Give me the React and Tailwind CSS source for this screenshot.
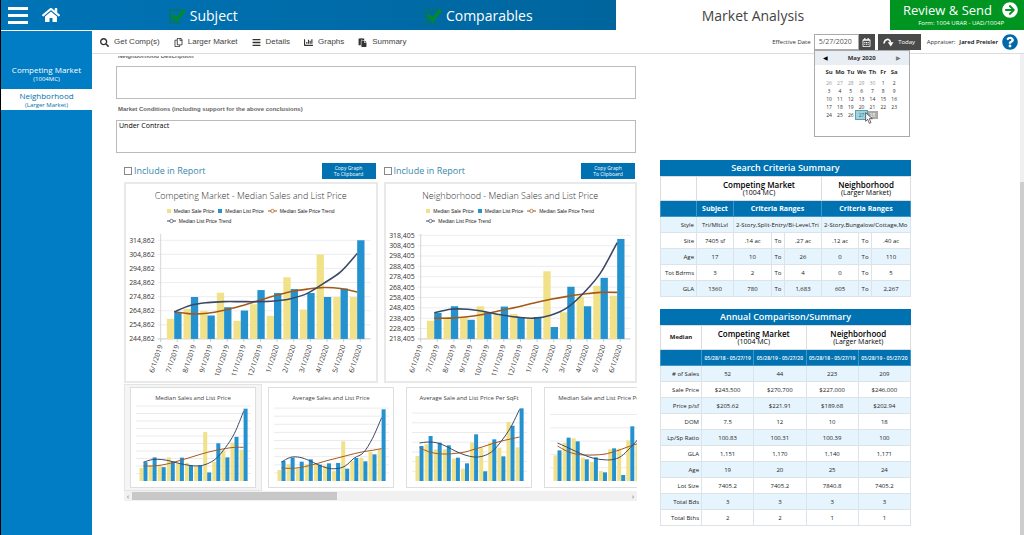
import React, { useState } from 'react';
import { FaHome, FaSearch, FaRegCopy, FaChartBar, FaPaste, FaRegCalendarAlt, FaQuestionCircle, FaArrowCircleRight, FaBars } from 'react-icons/fa';

const YELLOW = '#f1e28a';
const BLUE = '#2492cf';
const SALE_TREND = '#a4591c';
const LIST_TREND = '#3c4866';

const MONTHS = ['6/1/2019', '7/1/2019', '8/1/2019', '9/1/2019', '10/1/2019', '11/1/2019', '12/1/2019', '1/1/2020', '2/1/2020', '3/1/2020', '4/1/2020', '5/1/2020', '6/1/2020'];

// series values are heights above the baseline, in thirds of a unit
const competing = {
    sale: [61, 91, 85, 140, 55, 105, 70, 187, 89, 256, 127, 127],
    list: [79, 127, 71, 96, 86, 148, 139, 151, 139, 127, 153, 299],
    saleTrend: [82, 76, 78, 87, 100, 115, 130, 143, 151, 156, 153, 142],
    listTrend: [82, 102, 110, 113, 113, 113, 115, 122, 138, 169, 203, 259],
};

const neighborhood = {
    sale: [55, 66, 66, 99, 75, 76, 61, 205, 81, 128, 161, 131],
    list: [79, 99, 58, 81, 98, 66, 66, 36, 158, 99, 185, 303],
    saleTrend: [63, 63, 67, 75, 86, 97, 109, 120, 129, 136, 141, 141],
    listTrend: [79, 90, 90, 83, 73, 66, 63, 72, 95, 140, 200, 292],
};

const averageSales = {
    sale: [33, 50, 37, 50, 50, 47, 30, 119, 60, 70, 87, 95],
    list: [60, 70, 58, 65, 49, 53, 54, 37, 69, 59, 80, 215],
    saleTrend: [39, 38, 40, 46, 53, 61, 68, 75, 82, 88, 92, 97],
    listTrend: [57, 71, 71, 62, 49, 39, 37, 45, 69, 85, 128, 190],
};

const averageSqft = {
    sale: [75, 110, 95, 95, 67, 37, 115, 100, 115, 100, 177, 101],
    list: [105, 135, 115, 107, 70, 53, 140, 29, 125, 74, 166, 218],
    saleTrend: [100, 88, 82, 81, 83, 87, 95, 103, 112, 120, 126, 132],
    listTrend: [114, 117, 114, 103, 89, 78, 72, 75, 89, 120, 160, 215],
};

const medianSqft = {
    sale: [77, 115, 128, 70, 57, 30, 95, 97, 122, 110, 120, 130],
    list: [92, 130, 119, 65, 71, 26, 98, 18, 164, 110, 140, 210],
    saleTrend: [105, 90, 81, 78, 78, 80, 86, 95, 105, 114, 122, 130],
    listTrend: [114, 102, 89, 77, 68, 64, 64, 74, 100, 130, 165, 205],
};

const thumbs = [
    { title: 'Median Sales and List Price', data: neighborhood, scale: 0.716, grid: 7.5, lines: 10 },
    { title: 'Average Sales and List Price', data: averageSales, scale: 1, grid: 8.1, lines: 9 },
    { title: 'Average Sale and List Price Per SqFt', data: averageSqft, scale: 1, grid: 9.7, lines: 7 },
    { title: 'Median Sale and List Price Per SqFt', data: medianSqft, scale: 1, grid: 13.3, lines: 5 },
];

// smooth line through the points (Catmull-Rom to bezier)
function curve(points) {
    let d = `M${points[0][0]} ${points[0][1]}`;
    for (let i = 0; i < points.length - 1; i++) {
        const p0 = points[i - 1] || points[i];
        const p1 = points[i];
        const p2 = points[i + 1];
        const p3 = points[i + 2] || p2;
        d += ` C${p1[0] + (p2[0] - p0[0]) / 6} ${p1[1] + (p2[1] - p0[1]) / 6} ${p2[0] - (p3[0] - p1[0]) / 6} ${p2[1] - (p3[1] - p1[1]) / 6} ${p2[0]} ${p2[1]}`;
    }
    return d;
}

function Series({ data, x0, pitch, bar, base, scale = 1, stroke = 1.6 }) {
    const h = v => (v * scale) / 3;
    const trend = values => curve(values.map((v, i) => [x0 + i * pitch, base - h(v)]));
    return (
        <g>
            {data.sale.map((v, i) => (
                <rect key={`s${i}`} x={x0 + i * pitch - bar} y={base - h(v)} width={bar} height={h(v)} fill={YELLOW} />
            ))}
            {data.list.map((v, i) => (
                <rect key={`l${i}`} x={x0 + i * pitch} y={base - h(v)} width={bar} height={h(v)} fill={BLUE} />
            ))}
            <path d={trend(data.saleTrend)} fill="none" stroke={SALE_TREND} strokeWidth={stroke} />
            <path d={trend(data.listTrend)} fill="none" stroke={LIST_TREND} strokeWidth={stroke} />
        </g>
    );
}

function LegendLine({ color }) {
    return (
        <svg width="9" height="6" viewBox="0 0 9 6">
            <path d="M0 3h9" stroke={color} />
            <circle cx="4.5" cy="3" r="1.7" fill="#fff" stroke={color} strokeWidth="0.7" />
        </svg>
    );
}

function ChartCard({ title, data, top, step, count }) {
    const base = 108;
    const gap = step / 3;
    return (
        <div className="border-2 border-[#e9e9e9] bg-white">
            <h3 className="pt-1 text-center text-[9px] leading-4 font-light text-[#333]">{title}</h3>
            <div className="mx-auto flex w-[176px] flex-wrap gap-x-1 pt-0.5 pb-1.5 pl-1 font-[Liberation_Sans] text-[5px] leading-[10px] text-[#222]">
                <span className="flex items-center gap-[3px]"><i className="size-1 bg-[#f1e28a]" />Median Sale Price</span>
                <span className="flex items-center gap-[3px]"><i className="size-1 bg-[#2492cf]" />Median List Price</span>
                <span className="flex items-center gap-[3px]"><LegendLine color={SALE_TREND} />Median Sale Price Trend</span>
                <span className="flex items-center gap-[3px]"><LegendLine color={LIST_TREND} />Median List Price Trend</span>
            </div>
            <svg viewBox="0 0 252 150" className="block w-full">
                {Array.from({ length: count + 1 }, (_, i) => (
                    <g key={i}>
                        <path d={`M32 ${base - i * gap}H247`} stroke={i ? '#e8e8ec' : '#bbb'} strokeWidth="0.8" />
                        <text x="29" y={base - i * gap + 2.5} textAnchor="end" fontSize="7" fill="#333">
                            {(top - (count - i) * 10000).toLocaleString('en-US')}
                        </text>
                    </g>
                ))}
                <path d={`M35 2V${base}`} stroke="#ccc" strokeWidth="0.8" />
                {MONTHS.map((m, i) => (
                    <g key={m}>
                        <path d={`M${35 + i * 16.8} ${base}v3`} stroke="#bbb" strokeWidth="0.8" />
                        <text transform={`translate(${37 + i * 16.8} 115) rotate(-72)`} textAnchor="end" fontSize="7" fill="#333">{m}</text>
                    </g>
                ))}
                <Series data={data} x0={48.7} pitch={16.8} bar={7.4} base={base} />
            </svg>
        </div>
    );
}

function ReportChart({ id, ...chart }) {
    return (
        <section className="min-w-0 flex-1">
            <div className="flex h-[19px] items-start justify-between pr-0.5">
                <label htmlFor={id} className="flex items-center gap-0.5 text-[9px] leading-4 text-[#3a87ad]">
                    <input id={id} type="checkbox" className="size-2 appearance-none border border-[#888] bg-white" />
                    Include in Report
                </label>
                <button className="h-4 w-[54px] bg-[#0072b1] text-[5px] leading-[6px] font-medium text-white">
                    Copy Graph<br />To Clipboard
                </button>
            </div>
            <ChartCard {...chart} />
        </section>
    );
}

function Thumb({ title, data, scale, grid, lines, active }) {
    return (
        <button className={active ? 'shrink-0 border border-[#e4e4e4] bg-[#f5f5f5] px-[5px] py-0.5' : 'shrink-0 border border-transparent px-[5px] py-0.5'}>
            <span className="block w-[126px] border border-[#dedede] bg-white pt-1">
                <span className="block text-center text-[6px] leading-3 whitespace-nowrap text-[#444]">{title}</span>
                <svg viewBox="0 0 124 83" className="block w-full">
                    {Array.from({ length: lines }, (_, i) => (
                        <path key={i} d={`M5 ${77 - (i + 1) * grid}H120`} stroke="#e6e6ea" strokeWidth="0.8" />
                    ))}
                    <Series data={data} x0={12.5} pitch={9.1} bar={4} base={77} scale={scale} stroke={1} />
                </svg>
            </span>
        </button>
    );
}

const criteria = [
    ['Style', 'Tri/MltLvl', '2-Story,Split-Entry/Bi-Level,Tri/', '2-Story,Bungalow/Cottage,Mo'],
    ['Site', '7405 sf', '.14 ac', 'To', '.27 ac', '.12 ac', 'To', '.40 ac'],
    ['Age', '17', '10', 'To', '26', '0', 'To', '110'],
    ['Tot Bdrms', '3', '2', 'To', '4', '0', 'To', '5'],
    ['GLA', '1360', '780', 'To', '1,683', '605', 'To', '2,267'],
];

const annual = [
    ['# of Sales', '52', '44', '223', '209'],
    ['Sale Price', '$243,500', '$270,700', '$227,000', '$246,000'],
    ['Price p/sf', '$205.62', '$221.91', '$189.68', '$202.94'],
    ['DOM', '7.5', '12', '10', '18'],
    ['Lp/Sp Ratio', '100.83', '100.31', '100.39', '100'],
    ['GLA', '1,151', '1,170', '1,140', '1,171'],
    ['Age', '19', '20', '25', '24'],
    ['Lot Size', '7405.2', '7405.2', '7840.8', '7405.2'],
    ['Total Bds', '3', '3', '3', '3'],
    ['Total Bths', '2', '2', '1', '1'],
];

function MarketHead({ name, note, span }) {
    return (
        <th colSpan={span} className="h-6 border border-[#dcdcdc] p-0 text-[8px] leading-[9px] font-semibold text-black">
            {name}
            <span className="block text-[7px] leading-[8px] font-normal">{note}</span>
        </th>
    );
}

function BlueHead({ children, span, small }) {
    return (
        <th colSpan={span} className={small ? 'h-4 border border-[#3f95c6] p-0 text-[5px] leading-[8px] font-semibold whitespace-nowrap' : 'h-4 border border-[#3f95c6] p-0 text-[7px] leading-[10px]'}>
            {children}
        </th>
    );
}

const tableClass = 'w-full table-fixed border-collapse border border-[#dcdcdc] text-center text-[#222]';
const captionClass = 'h-4 bg-[#0072b1] text-[9px] leading-4 font-semibold text-white';
const cellClass = 'h-4 overflow-hidden border border-[#dce4ea] p-0 text-[6px] leading-[10px] whitespace-nowrap';
const rowHeadClass = 'h-4 border border-[#dce4ea] p-0 pr-0.5 text-right text-[6px] leading-[10px] font-medium whitespace-nowrap';

function CriteriaTable() {
    return (
        <table className={tableClass}>
            <caption className={captionClass}>Search Criteria Summary</caption>
            <colgroup>
                <col className="w-[36px]" /><col className="w-[37px]" /><col className="w-[38px]" /><col className="w-[13px]" />
                <col className="w-[37px]" /><col className="w-[37px]" /><col className="w-[13px]" /><col />
            </colgroup>
            <thead>
                <tr>
                    <td className="border border-[#dcdcdc]" />
                    <MarketHead name="Competing Market" note="(1004 MC)" span={4} />
                    <MarketHead name="Neighborhood" note="(Larger Market)" span={3} />
                </tr>
                <tr className="bg-[#0072b1] text-white">
                    <BlueHead />
                    <BlueHead>Subject</BlueHead>
                    <BlueHead span={3}>Criteria Ranges</BlueHead>
                    <BlueHead span={3}>Criteria Ranges</BlueHead>
                </tr>
            </thead>
            <tbody>
                {criteria.map(([head, ...cells]) => (
                    <tr key={head} className="odd:bg-[#e6f4fd]">
                        <th className={rowHeadClass}>{head}</th>
                        {cells.map((c, i) => (
                            <td key={i} colSpan={cells.length === 3 && i > 0 ? 3 : 1} className={cellClass}>
                                {cells.length === 3 && i > 0 ? <span className="mx-0.5 block overflow-hidden text-left">{c}</span> : c}
                            </td>
                        ))}
                    </tr>
                ))}
            </tbody>
        </table>
    );
}

function AnnualTable() {
    return (
        <table className={tableClass}>
            <caption className={captionClass}>Annual Comparison/Summary</caption>
            <colgroup>
                <col className="w-[41px]" /><col /><col /><col /><col />
            </colgroup>
            <thead>
                <tr>
                    <th className="border border-[#dcdcdc] p-0 text-[6px]">Median</th>
                    <MarketHead name="Competing Market" note="(1004 MC)" span={2} />
                    <MarketHead name="Neighborhood" note="(Larger Market)" span={2} />
                </tr>
                <tr className="bg-[#0072b1] text-white">
                    <BlueHead />
                    <BlueHead small>05/28/18 - 05/27/19</BlueHead>
                    <BlueHead small>05/28/19 - 05/27/20</BlueHead>
                    <BlueHead small>05/28/18 - 05/27/19</BlueHead>
                    <BlueHead small>05/28/19 - 05/27/20</BlueHead>
                </tr>
            </thead>
            <tbody>
                {annual.map(([head, ...cells]) => (
                    <tr key={head} className="odd:bg-[#e6f4fd]">
                        <th className={rowHeadClass}>{head}</th>
                        {cells.map((c, i) => <td key={i} className={cellClass}>{c}</td>)}
                    </tr>
                ))}
            </tbody>
        </table>
    );
}

const weeks = [
    [26, 27, 28, 29, 30, 1, 2],
    [3, 4, 5, 6, 7, 8, 9],
    [10, 11, 12, 13, 14, 15, 16],
    [17, 18, 19, 20, 21, 22, 23],
    [24, 25, 26, 27, 28],
];

function dayClass(week, day) {
    if (week === 0 && day > 20) return 'p-0 text-[#999]';
    if (week === 4 && day === 27) return 'bg-[#9fd3df] p-0 text-[#2a6f80] outline outline-[#5f9ea8]';
    if (week === 4 && day === 28) return 'bg-[#a9a9a9] p-0 text-white';
    return 'p-0';
}

function Calendar() {
    return (
        <div className="absolute top-full left-0 z-10 h-[87px] w-24 border border-[#aaa] bg-white text-[#333]">
            <div className="flex h-3.5 items-center justify-between bg-[#e9eef5] px-2">
                <button aria-label="Previous month" className="text-[6px] leading-none text-black">◀</button>
                <span className="text-[6px] font-bold">May 2020</span>
                <button aria-label="Next month" className="text-[6px] leading-none text-[#777]">▶</button>
            </div>
            <table className="mx-auto w-[76px] table-fixed text-center text-[5px] leading-[8px]">
                <thead>
                    <tr className="h-3.5">
                        {['Su', 'Mo', 'Tu', 'We', 'Th', 'Fr', 'Sa'].map(d => <th key={d} className="p-0 text-[6px]">{d}</th>)}
                    </tr>
                </thead>
                <tbody>
                    {weeks.map((week, w) => (
                        <tr key={w}>
                            {week.map(day => <td key={day} className={dayClass(w, day)}>{day}</td>)}
                        </tr>
                    ))}
                </tbody>
            </table>
            <svg viewBox="0 0 12 18" className="absolute top-[61px] left-[50px] h-3 w-2">
                <path d="M1 1v13l3-3 2.5 6 2.5-1-2.5-6H11z" fill="#fff" stroke="#222" />
            </svg>
        </div>
    );
}

function Tab({ children, className }) {
    return (
        <a href="#" className={className}>
            <svg width="18" height="17" viewBox="0 0 18 17" fill="none">
                <path d="M13 15.5H2V3H13" stroke="#07755f" strokeWidth="1.5" />
                <path d="M4 8l4.5 5L16.5 3" stroke="#008a2c" strokeWidth="3.5" />
            </svg>
            {children}
        </a>
    );
}

const tools = [
    { name: 'Get Comp(s)', icon: FaSearch },
    { name: 'Larger Market', icon: FaRegCopy },
    { name: 'Details', icon: FaBars },
    { name: 'Graphs', icon: FaChartBar },
    { name: 'Summary', icon: FaPaste },
];

export default function App() {
    const [date, setDate] = useState('5/27/2020');
    const [description, setDescription] = useState('');
    const [conditions, setConditions] = useState('Under Contract');

    return (
        <div className="flex min-h-screen flex-col overflow-hidden border-l border-black bg-white font-['Open_Sans',sans-serif] text-[#333]">
            <header className="flex h-[31px] border-b border-white bg-white">
                <div className="flex flex-1 bg-linear-to-r from-[#0074b7] to-[#00659d] text-white">
                    <div className="flex w-[92px] items-center gap-3.5 pl-[7px]">
                        <button aria-label="Menu" className="flex w-5 flex-col gap-1">
                            <i className="h-[3px] bg-white" /><i className="h-[3px] bg-white" /><i className="h-[3px] bg-white" />
                        </button>
                        <a href="#" aria-label="Home"><FaHome size={18} /></a>
                    </div>
                    <Tab className="flex flex-1 items-center justify-center gap-1 pr-14 text-[14px]">Subject</Tab>
                    <Tab className="flex flex-1 items-center justify-center gap-1 pr-7 text-[14px]">Comparables</Tab>
                </div>
                <a href="#" className="flex w-[274px] items-center justify-center text-[14px] text-[#444]">Market Analysis</a>
                <a href="#" className="flex w-[134px] flex-col items-end bg-[#009420] pr-1.5 text-white">
                    <span className="flex items-center gap-2.5 pt-px text-[13px] leading-[18px]">
                        Review &amp; Send
                        <FaArrowCircleRight size={16} />
                    </span>
                    <span className="pr-3.5 text-[6px] leading-[8px]">Form: 1004 URAR - UAD/1004P</span>
                </a>
            </header>

            <div className="flex flex-1">
                <nav className="w-[91px] shrink-0 bg-[#007dc4] pt-[33px] text-center">
                    <a href="#" className="block pb-1.5 text-[8px] leading-[11px] text-white">
                        Competing Market
                        <span className="block text-[6px] leading-[8px]">(1004MC)</span>
                    </a>
                    <a href="#" className="block bg-white py-px text-[8px] leading-[11px] text-[#0070a8]">
                        Neighborhood
                        <span className="block text-[6px] leading-[8px]">(Larger Market)</span>
                    </a>
                </nav>

                <main className="flex min-w-0 flex-1 flex-col">
                    <div className="flex h-[23px] items-center border-b border-[#ddd] pr-1.5 pl-2">
                        <div className="flex flex-1 gap-3.5 font-[Liberation_Sans] text-[8px] text-[#444]">
                            {tools.map(tool => {
                                const Icon = tool.icon;
                                return (
                                    <button key={tool.name} className="flex items-center gap-[5px]">
                                        <Icon size={9} className="text-[#333]" />
                                        {tool.name}
                                    </button>
                                );
                            })}
                        </div>
                        <div className="flex items-center text-[6px]">
                            <label htmlFor="effective" className="pr-[3px]">Effective Date</label>
                            <div className="relative flex h-4 w-[61px]">
                                <input id="effective" value={date} onChange={e => setDate(e.target.value)} className="min-w-0 flex-1 border border-[#aaa] pl-1 text-[7px] text-[#555]" />
                                <button aria-label="Open calendar" className="flex w-4 items-center justify-center bg-[#4a4a4a] text-white"><FaRegCalendarAlt size={9} /></button>
                                <Calendar />
                            </div>
                            <button className="ml-[3px] flex h-4 w-[43px] items-center justify-center gap-1 bg-[#4a4a4a] text-white">
                                <svg width="11" height="10" viewBox="0 0 11 10">
                                    <path d="M1 6.5C1.5 2 6.5 0.5 7.5 5.5" fill="none" stroke="#fff" strokeWidth="1.6" />
                                    <path d="M4.8 5.2h5.7L7.8 9.5z" fill="#fff" />
                                </svg>
                                Today
                            </button>
                            <span className="pl-1.5">Appraiser:</span>
                            <span className="pr-1 pl-1 font-semibold text-black">Jared Preisler</span>
                            <a href="#" aria-label="Help" className="text-[#0068a8]"><FaQuestionCircle size={16} /></a>
                        </div>
                    </div>

                    <div className="flex flex-1">
                        <div className="flex min-w-0 flex-1 gap-[23px] pt-0.5 pr-[109px] pl-6">
                            <div className="min-w-0 flex-1">
                                <div className="mr-px">
                                    <div className="flex h-1 items-end overflow-hidden">
                                        <label htmlFor="description" className="pl-0.5 font-[Liberation_Sans] text-[6px] leading-[8px] font-bold text-[#666]">Neighborhood Description</label>
                                    </div>
                                    <textarea id="description" value={description} onChange={e => setDescription(e.target.value)} className="mt-1.5 block h-[33px] w-full resize-none border border-[#bbb]" />
                                    <label htmlFor="conditions" className="block pt-1.5 pb-1.5 pl-0.5 font-[Liberation_Sans] text-[6px] leading-[9px] font-bold text-[#666]">Market Conditions (including support for the above conclusions)</label>
                                    <textarea id="conditions" value={conditions} onChange={e => setConditions(e.target.value)} className="block h-[33px] w-full resize-none border border-[#bbb] px-0.5 text-[7px] leading-[10px] text-black" />
                                </div>
                                <div className="pt-2.5 pl-2">
                                    <div className="flex gap-1.5">
                                        <ReportChart id="competing" title="Competing Market - Median Sales and List Price" data={competing} top={314862} step={42.7} count={7} />
                                        <ReportChart id="neighborhood" title="Neighborhood - Median Sales and List Price" data={neighborhood} top={318405} step={31.4} count={10} />
                                    </div>
                                    <div className="flex overflow-hidden pt-px">
                                        {thumbs.map((thumb, i) => <Thumb key={thumb.title} {...thumb} active={i === 0} />)}
                                    </div>
                                    <div className="flex h-2.5 items-center bg-[#f1f1f1] text-[8px] leading-none text-[#777]">
                                        <span className="w-2 text-center">‹</span>
                                        <span className="h-2 w-2/5 bg-[#c8c8c8]" />
                                        <span className="ml-auto w-2 text-center">›</span>
                                    </div>
                                </div>
                            </div>

                            <aside className="flex w-[251px] shrink-0 flex-col gap-3 pt-[104px]">
                                <CriteriaTable />
                                <AnnualTable />
                            </aside>
                        </div>
                        <div className="flex w-1 flex-col bg-[#f0f0f3] pt-32">
                            <div className="flex-1 bg-[#cdcdcd]" />
                        </div>
                    </div>
                </main>
            </div>
        </div>
    );
}
